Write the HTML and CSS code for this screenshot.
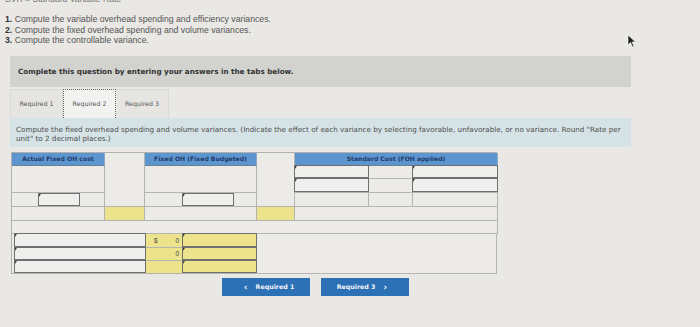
FILE: index.html
```html
<!DOCTYPE html>
<html>
<head>
<meta charset="utf-8">
<link rel="stylesheet" href="styles.css">
</head>
<body>
<div class="page">
  <div class="clip"><span>SVR = Standard Variable Rate</span></div>
  <ol class="tasks">
    <li><b>1.</b> Compute the variable overhead spending and efficiency variances.</li>
    <li><b>2.</b> Compute the fixed overhead spending and volume variances.</li>
    <li><b>3.</b> Compute the controllable variance.</li>
  </ol>
  <div class="panel">
    <div class="banner">Complete this question by entering your answers in the tabs below.</div>
    <div class="tabs">
      <div class="tab">Required 1</div>
      <div class="tab active">Required 2</div>
      <div class="tab">Required 3</div>
    </div>
    <div class="info">Compute the fixed overhead spending and volume variances. (Indicate the effect of each variance by selecting favorable, unfavorable, or no variance. Round "Rate per unit" to 2 decimal places.)</div>
    <div class="sheet">
      <div class="gtop">
        <div class="hd c1">Actual Fixed OH cost</div>
        <div class="cell col2"></div>
        <div class="hd c3">Fixed OH (Fixed Budgeted)</div>
        <div class="cell col4"></div>
        <div class="hd c5">Standard Cost (FOH applied)</div>

        <div class="cell a1"></div>
        <div class="cell a3"></div>
        <div class="cell"><div class="inp"></div></div>
        <div class="cell"></div>
        <div class="cell"><div class="inp"></div></div>
        <div class="cell"><div class="inp"></div></div>
        <div class="cell"></div>
        <div class="cell"><div class="inp"></div></div>

        <div class="cell pad1"><div class="inp w40"></div></div>
        <div class="cell pad3"><div class="inp w50"></div></div>
        <div class="cell"></div>
        <div class="cell"></div>
        <div class="cell"></div>

        <div class="cell"></div>
        <div class="cell yellow"></div>
        <div class="cell"></div>
        <div class="cell yellow"></div>
        <div class="cell span3"></div>

        <div class="cell full"></div>
      </div>
      <div class="gbot">
        <div class="gutter"></div>
        <div class="cell"><div class="inp"></div></div>
        <div class="cell yellow amt"><span>$</span><span>0</span></div>
        <div class="cell yellow"><div class="inp"></div></div>
        <div class="cell rest"></div>

        <div class="cell"><div class="inp"></div></div>
        <div class="cell yellow amt"><span></span><span>0</span></div>
        <div class="cell yellow"><div class="inp"></div></div>

        <div class="cell"><div class="inp"></div></div>
        <div class="cell yellow amt"></div>
        <div class="cell yellow"><div class="inp"></div></div>
      </div>
    </div>
    <div class="nav">
      <button class="btn"><span class="chev">&#8249;</span> Required 1</button>
      <button class="btn">Required 3 <span class="chev">&#8250;</span></button>
    </div>
  </div>
  <svg class="cursor" width="10" height="14" viewBox="0 0 10 14"><path d="M1 1 L1 11 L3.5 8.5 L5.5 13 L7 12.3 L5 8 L8.5 8 Z" fill="#222" stroke="#fff" stroke-width="0.6"/></svg>
</div>
</body>
</html>
```
FILE: styles.css
```css
* { box-sizing: border-box; }
html, body { margin: 0; padding: 0; }
body {
  background: #e9e8e4;
  font-family: "Liberation Sans", Arial, sans-serif;
  color: #444;
  width: 700px;
  height: 327px;
  overflow: hidden;
}
.page { position: relative; padding: 0 0 0 5px; }
.clip {
  height: 4px;
  overflow: hidden;
  font-size: 8.6px;
  line-height: 10px;
  color: #777;
}
.clip span { display: block; margin-top: -6px; }
.tasks {
  list-style: none;
  margin: 10px 0 0 0;
  padding: 0;
  font-size: 8.7px;
  line-height: 10.5px;
  color: #555;
}
.tasks b { color: #333; }
.panel { width: 621px; margin: 10px 0 0 5px; }
.banner {
  background: #d2d2cf;
  height: 31px;
  display: flex;
  align-items: center;
  padding-left: 8px;
  font-family: "DejaVu Sans", Verdana, sans-serif;
  font-weight: bold;
  font-size: 7.2px;
  color: #333;
}
.tabs {
  display: flex;
  padding-top: 2px;
  height: 31px;
}
.tab {
  width: 53px;
  display: flex;
  align-items: center;
  justify-content: center;
  font-family: "DejaVu Sans", Verdana, sans-serif;
  font-size: 6.3px;
  color: #555;
  border: 1px solid #d9d9d6;
  border-bottom: none;
  background: #e6e5e1;
}
.tab + .tab { border-left: none; }
.tab.active {
  background: #f2f2f0;
  border: 1px dotted #666;
  border-bottom: none;
}
.info {
  background: #d5e3e6;
  height: 29px;
  padding: 7px 6px 0 6px;
  font-family: "DejaVu Sans", Verdana, sans-serif;
  font-size: 7.2px;
  line-height: 9px;
  color: #4c4c4c;
}
.sheet {
  width: 486px;
  margin: 5px 0 0 1px;
  border: 1px solid #b0b0ad;
  border-right: none;
  border-bottom: none;
  background: #ecebe8;
}
.gtop {
  display: grid;
  grid-template-columns: 93px 40px 112px 38px 74px 44px 85px;
  grid-template-rows: 13px 13px 14px 14px 14px 13px;
}
.cell {
  border-right: 1px solid #b4b4b1;
  border-bottom: 1px solid #b4b4b1;
  background: #ecebe8;
}
.hd {
  background: #5d95cf;
  color: #1f3a6c;
  font-family: "DejaVu Sans", Verdana, sans-serif;
  font-weight: bold;
  font-size: 6.1px;
  display: flex;
  align-items: center;
  justify-content: center;
  border-right: 1px solid #8aa9c9;
  border-bottom: 1px solid #6a7f98;
}
.c1 { grid-column: 1; grid-row: 1; }
.col2 { grid-column: 2; grid-row: 1 / 5; }
.c3 { grid-column: 3; grid-row: 1; }
.col4 { grid-column: 4; grid-row: 1 / 5; }
.c5 { grid-column: 5 / 8; grid-row: 1; }
.a1 { grid-column: 1; grid-row: 2 / 4; }
.a3 { grid-column: 3; grid-row: 2 / 4; }
.span3 { grid-column: 5 / 8; }
.full { grid-column: 1 / 8; }
.yellow { background: #ede38c; }
.inp {
  position: relative;
  height: 100%;
  border: 1px solid #6f6f6f;
  background: #efefed;
}
.yellow .inp { background: #ede38c; }
.inp::before {
  content: "";
  position: absolute;
  left: 0;
  top: 0;
  width: 0;
  height: 0;
  border-top: 3px solid #444;
  border-right: 2px solid transparent;
}
.cell > .inp { margin: -1px -1px 0 -1px; height: calc(100% + 1px); }
.pad1 { padding-left: 26px; }
.pad1 > .inp { width: 42px; margin: 0; height: 100%; }
.pad3 { padding-left: 37px; }
.pad3 > .inp { width: 52px; margin: 0; height: 100%; }
.gbot {
  display: grid;
  grid-template-columns: 3px 131px 37px 74px 1fr;
  grid-template-rows: 14px 13px 13px;
}
.gutter {
  grid-column: 1;
  grid-row: 1 / 4;
  border-bottom: 1px solid #b4b4b1;
}
.rest { grid-column: 5; grid-row: 1 / 4; }
.amt {
  display: flex;
  justify-content: space-between;
  align-items: center;
  padding: 0 3px 0 8px;
  font-size: 6.5px;
  color: #444;
}
.nav {
  display: flex;
  gap: 11px;
  padding-left: 212px;
  margin-top: 4px;
}
.btn {
  width: 88px;
  height: 18px;
  border: none;
  background: #2c70b6;
  color: #f4f6fa;
  font-family: "DejaVu Sans", Verdana, sans-serif;
  font-weight: bold;
  font-size: 6.3px;
  padding: 0;
}
.chev { font-size: 9px; margin: 0 6px; vertical-align: -1px; }
.cursor { position: absolute; left: 627px; top: 34px; }
```
